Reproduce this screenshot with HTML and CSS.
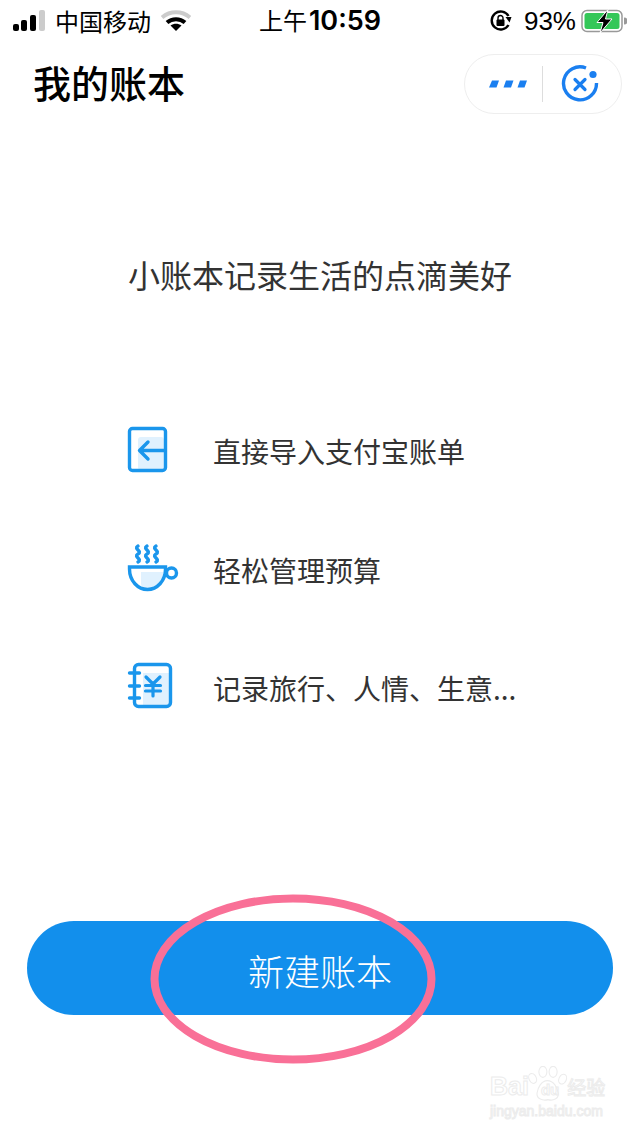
FILE: index.html
```html
<!DOCTYPE html>
<html lang="zh-CN">
<head>
  <meta charset="UTF-8">
  <meta name="viewport" content="width=device-width, initial-scale=1.0">
  <title>我的账本</title>
  <link rel="stylesheet" href="styles.css">
</head>
<body>
  <div class="page">
    <!-- Status bar -->
    <div class="status-bar">
      <div class="status-left">
        <svg class="signal" width="32" height="22" viewBox="0 0 32 22">
          <rect x="0" y="14" width="6" height="7" rx="2" fill="#000"/>
          <rect x="8" y="10" width="6" height="11" rx="2" fill="#000"/>
          <rect x="17" y="5" width="6" height="16" rx="2" fill="#000"/>
          <rect x="26" y="0" width="6" height="21" rx="2" fill="#ccc"/>
        </svg>
        <span class="carrier">中国移动</span>
        <svg class="wifi" width="30" height="22" viewBox="0 0 30 22">
          <path d="M1 7.5 C9 0.5 21 0.5 29 7.5" fill="none" stroke="#ccc" stroke-width="4"/>
          <path d="M6 12.5 C11 8 19 8 24 12.5" fill="none" stroke="#000" stroke-width="4"/>
          <path d="M9.5 15.5 C13 13 17 13 20.5 15.5 L15 21 Z" fill="#000"/>
        </svg>
      </div>
      <div class="status-time">上午<b>10:59</b></div>
      <div class="status-right">
        <svg class="lock" width="22" height="22" viewBox="0 0 22 22">
          <path d="M18.5 15 A9 9 0 1 1 18.5 6" fill="none" stroke="#000" stroke-width="2.4"/>
          <path d="M15.5 7 L21.5 7 L19.5 12.5 Z" fill="#000"/>
          <rect x="6.5" y="9.5" width="8" height="6.5" rx="1" fill="#000"/>
          <path d="M8 10 V8 a2.5 2.5 0 0 1 5 0 V10" fill="none" stroke="#000" stroke-width="1.4"/>
        </svg>
        <span class="percent">93%</span>
        <svg class="battery" width="46" height="24" viewBox="0 0 46 24">
          <rect x="1" y="1.5" width="40" height="21" rx="5" fill="none" stroke="#999" stroke-width="1.5"/>
          <rect x="3.5" y="4" width="35" height="16" rx="2.5" fill="#34c759"/>
          <path d="M43 8.5 a3 3 0 0 1 0 7 Z" fill="#999"/>
          <path d="M27 0.5 L16 13.5 H22 L19 24 L31 10 H24.5 Z" fill="#000" stroke="#fff" stroke-width="1"/>
        </svg>
      </div>
    </div>

    <!-- Title bar -->
    <div class="title-bar">
      <h1>我的账本</h1>
      <div class="capsule">
        <svg class="capsule-more" width="38" height="8" viewBox="0 0 38 8">
          <path d="M3 0.5 H10 L7.500 7.5 H0 Z M17 0.5 H24.500 L22 7.5 H14.500 Z M31 0.5 H38 L35.500 7.5 H28.500 Z" fill="#1a7ff0"/>
        </svg>
        <span class="capsule-line"></span>
        <svg class="capsule-close" width="38" height="38" viewBox="0 0 38 38">
          <path d="M25 3 A16.5 16.5 0 1 0 35.5 18" fill="none" stroke="#1a7ff0" stroke-width="3.4"/>
          <circle cx="32" cy="9.5" r="3.6" fill="#1a7ff0"/>
          <path d="M14 14.5 L24 24.5 M24 14.5 L14 24.5" stroke="#1a7ff0" stroke-width="3.2" stroke-linecap="round"/>
        </svg>
      </div>
    </div>

    <div class="content">
      <p class="slogan">小账本记录生活的点滴美好</p>

      <ul class="features">
        <li class="feature">
          <svg class="feature-icon" width="50" height="50" viewBox="0 0 50 50">
            <rect x="10" y="10" width="26" height="33" rx="3" fill="#e0f1fe"/>
            <rect x="1.5" y="1.5" width="36" height="42" rx="3" fill="none" stroke="#1a96ec" stroke-width="3.4"/>
            <path d="M37 23.5 H12 M20 15 L11.5 23.5 L20 32" fill="none" stroke="#1a96ec" stroke-width="3.4" stroke-linecap="round" stroke-linejoin="round"/>
          </svg>
          <span>直接导入支付宝账单</span>
        </li>
        <li class="feature">
          <svg class="feature-icon" width="50" height="50" viewBox="0 0 50 50">
            <path d="M13 26 H36 C35 34 29 42 19 42 C15 42 13 40 13 38 Z" fill="#e0f1fe"/>
            <path d="M1.5 21 H37.5 V23 C37.5 35 29 43.5 19.5 43.5 C10 43.5 1.5 35 1.5 23 Z" fill="none" stroke="#1a96ec" stroke-width="3.4"/>
            <circle cx="43.5" cy="27" r="5" fill="none" stroke="#1a96ec" stroke-width="3.4"/>
            <path d="M10 0 C5 3 15 5 10 8 C5 11 15 13 10 16 M19 0 C14 3 24 5 19 8 C14 11 24 13 19 16 M28 0 C23 3 33 5 28 8 C23 11 33 13 28 16" fill="none" stroke="#1a96ec" stroke-width="3.4" stroke-linecap="round"/>
          </svg>
          <span>轻松管理预算</span>
        </li>
        <li class="feature">
          <svg class="feature-icon" width="50" height="50" viewBox="0 0 50 50">
            <rect x="15" y="9" width="27" height="33" fill="#e0f1fe"/>
            <rect x="6.5" y="0.5" width="36" height="42" rx="4" fill="none" stroke="#1a96ec" stroke-width="3.4"/>
            <path d="M1.5 9 H11.5 M1.5 22 H11.5 M1.5 34 H11.5" stroke="#1a96ec" stroke-width="3.4" stroke-linecap="round"/>
            <path d="M18 13 L25 20 L32 13 M25 20 V32 M17.5 21.5 H32.5 M17.5 27 H32.5" fill="none" stroke="#1a96ec" stroke-width="3.2" stroke-linecap="round" stroke-linejoin="round"/>
          </svg>
          <span>记录旅行、人情、生意...</span>
        </li>
      </ul>

      <button class="create-button" type="button">新建账本</button>
    </div>

    <!-- Pink annotation drawn over the screenshot -->
    <svg class="annotation" width="292" height="176" viewBox="0 0 292 176">
      <ellipse cx="146" cy="88" rx="138.500" ry="80.500" fill="none" stroke="#f97097" stroke-width="8"/>
    </svg>

    <!-- Watermark -->
    <div class="watermark">
      <svg class="watermark-paw" width="60" height="52" viewBox="0 0 60 52">
        <g fill="#fff" stroke="#ececec" stroke-width="1.5">
          <ellipse cx="9" cy="17" rx="5" ry="7" transform="rotate(-25 9 17)"/>
          <ellipse cx="23" cy="8" rx="5.500" ry="7.500"/>
          <ellipse cx="37" cy="8" rx="5.500" ry="7.500"/>
          <ellipse cx="50" cy="18" rx="5" ry="7" transform="rotate(25 50 18)"/>
          <path d="M29 20 C38 20 43 30 44 37 C45 45 37 48 30 46 C23 48 14 45 15 37 C16 30 21 20 29 20 Z"/>
        </g>
      </svg>
      <div class="watermark-logo"><span>Bai</span><span class="watermark-du">du</span><span class="watermark-cn">经验</span></div>
      <div class="watermark-url">jingyan.baidu.com</div>
    </div>
  </div>
</body>
</html>
```

FILE: styles.css
```css
/* General page styling */
body {
  margin: 0;
  padding: 0;
  background-color: #fff;
  font-family: "Noto Sans CJK SC", "Noto Sans", sans-serif;
  color: #333;
}

.page {
  position: relative;
  width: 640px;
  height: 1136px;
  overflow: hidden;
}

/* Status bar */
.status-bar {
  display: grid;
  grid-template-columns: 1fr auto 1fr;
  align-items: center;
  height: 40px;
  padding: 0 13px;
  color: #000;
  font-size: 24px;
  line-height: 40px;
}

.status-left,
.status-right {
  display: flex;
  align-items: center;
}

.status-right {
  justify-content: flex-end;
}

.carrier {
  margin-left: 10px;
}

.wifi {
  margin-left: 10px;
}

.status-time b {
  margin-left: 2px;
  font-family: Inter, "Liberation Sans", sans-serif;
  font-weight: 600;
  font-size: 27px;
}

.percent {
  margin: 0 5px 0 12px;
  font-family: "Liberation Sans", Arial, sans-serif;
  font-size: 26px;
}

/* Title bar */
.title-bar {
  display: flex;
  align-items: center;
  justify-content: space-between;
  height: 60px;
  margin-top: 14px;
  padding: 0 18px 0 33px;
}

h1 {
  margin: -4px 0 0;
  font-size: 38px;
  font-weight: 500;
  color: #000;
  line-height: 60px;
}

.capsule {
  box-sizing: border-box;
  display: flex;
  align-items: center;
  width: 158px;
  height: 60px;
  padding-left: 24px;
  border: 1px solid #eee;
  border-radius: 30px;
}

.capsule-line {
  width: 1px;
  height: 36px;
  margin: 0 18px 0 15px;
  background-color: #ddd;
}

/* Content */
.content {
  padding: 0 27px;
}

.slogan {
  margin: 136px 0 0 101px;
  font-size: 32px;
  line-height: 48px;
}

.features {
  list-style: none;
  margin: 128px 0 0 101px;
  padding: 0;
}

.feature {
  display: flex;
  align-items: center;
  height: 50px;
  margin-bottom: 68.5px;
  font-size: 28px;
}

.feature-icon {
  flex: none;
  margin-top: 2px;
  margin-right: 35px;
  overflow: visible;
}

.create-button {
  display: block;
  width: 586px;
  height: 94px;
  margin-top: 208px;
  padding: 4px 0 0;
  border: none;
  border-radius: 47px;
  background-color: #128fec;
  color: #fff;
  font-family: inherit;
  font-size: 36px;
  font-weight: 300;
}

/* Things lying over the page */
.annotation {
  position: absolute;
  left: 147px;
  top: 891px;
}

.watermark {
  position: absolute;
  left: 490px;
  top: 1066px;
  width: 118px;
  height: 56px;
  color: transparent;
  -webkit-text-stroke: 1px #ececec;
}

.watermark-paw {
  position: absolute;
  left: 36px;
  top: 0;
  width: 44px;
  height: 38px;
}

.watermark-logo {
  position: relative;
  display: flex;
  align-items: baseline;
  height: 36px;
  padding-top: 4px;
  box-sizing: border-box;
  font-family: "Liberation Sans", Arial, sans-serif;
  font-size: 25px;
  font-weight: bold;
  line-height: 32px;
}

.watermark-du {
  margin-left: 12px;
  font-size: 15px;
}

.watermark-cn {
  margin-left: 8px;
  font-family: "Noto Sans CJK SC", sans-serif;
  font-size: 19px;
  font-weight: normal;
}

.watermark-url {
  position: relative;
  font-family: "Liberation Sans", Arial, sans-serif;
  font-size: 14px;
  line-height: 18px;
  white-space: nowrap;
}
```
